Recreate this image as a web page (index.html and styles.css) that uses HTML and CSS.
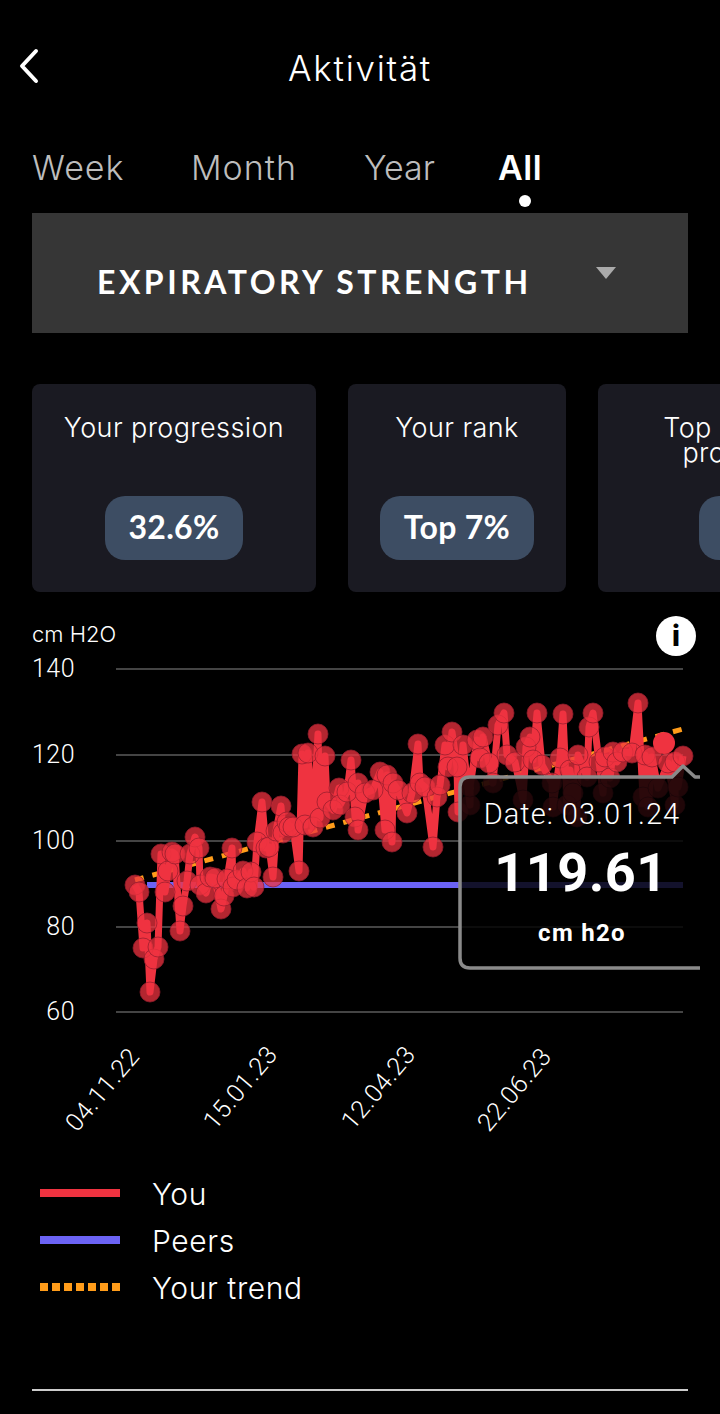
FILE: index.html
```html
<!DOCTYPE html>
<html lang="de">
<head>
<meta charset="utf-8">
<title>Aktivität</title>
<link rel="stylesheet" href="styles.css">
</head>
<body>
<main class="page">
  <header class="topbar">
    <svg class="back" viewBox="0 0 20 36" width="20" height="36"><path d="M17 3 3 18l14 15"/></svg>
    <h1 class="title">Aktivität</h1>
  </header>
  <nav class="tabs">
    <span class="tab tab-week">Week</span>
    <span class="tab tab-month">Month</span>
    <span class="tab tab-year">Year</span>
    <span class="tab tab-all">All</span>
  </nav>
  <div class="select">
    <span class="select-label">EXPIRATORY STRENGTH</span>
    <span class="select-arrow"></span>
  </div>
  <section class="cards">
    <article class="card card-a"><p class="card-title">Your progression</p><span class="pill pill-a">32.6%</span></article>
    <article class="card card-b"><p class="card-title">Your rank</p><span class="pill pill-b">Top 7%</span></article>
    <article class="card card-c"><p class="card-title">Top 10% peers<br>progression</p><span class="pill pill-c">9.1%</span></article>
  </section>
  <div class="chart-head">
    <span class="unit">cm H2O</span>
    <span class="info">i</span>
  </div>
  <svg class="chart" viewBox="0 650 700 500" width="700" height="500">
    <g class="grid">
      <line x1="116" x2="683" y1="669" y2="669"/>
      <line x1="116" x2="683" y1="755" y2="755"/>
      <line x1="116" x2="683" y1="841" y2="841"/>
      <line x1="116" x2="683" y1="927" y2="927"/>
      <line x1="116" x2="683" y1="1012" y2="1012"/>
    </g>
    <g class="ylabels">
      <text x="75" y="677">140</text>
      <text x="75" y="763">120</text>
      <text x="75" y="849">100</text>
      <text x="75" y="935">80</text>
      <text x="75" y="1020">60</text>
    </g>
    <line class="peers" x1="147" x2="683" y1="885" y2="885"/>
    <line class="trend" x1="135" x2="683" y1="880" y2="729"/>
    <polyline class="you" points="135,885 139,892 143,948 147,923 150,992 154,959 158,947 161,854 165,892 168,871 172,852 175,854 180,931 183,906 187,881 190,854 195,837 199,848 200,885 206,893 210,877 215,878 221,909 224,896 227,879 232,848 233,887 237,880 243,871 247,888 251,872 254,887 257,842 262,802 266,848 269,847 273,877 276,831 281,806 283,833 287,822 289,827 293,827 299,871 302,754 305,825 308,753 313,827 318,734 320,818 325,756 327,802 333,810 339,788 340,805 347,792 351,760 355,817 358,783 358,830 365,793 373,790 380,772 385,830 387,775 392,842 393,783 398,790 407,813 412,793 418,744 420,783 425,787 433,847 437,797 440,785 445,745 448,767 452,732 457,767 458,812 463,745 470,805 470,787 477,740 480,758 483,737 489,763 493,783 498,725 504,713 507,755 515,762 523,800 526,747 530,737 533,760 537,713 542,765 552,783 553,807 560,758 563,714 567,805 570,770 573,793 577,817 578,755 587,777 589,727 593,713 599,762 603,793 605,757 610,778 613,752 617,762 623,752 632,753 638,703 643,797 645,755 648,807 652,757 658,788 668,763 675,805 675,762 678,787 683,756"/>
    <g class="points">
      <circle cx="135" cy="885" r="10"/><circle cx="139" cy="892" r="10"/><circle cx="143" cy="948" r="10"/><circle cx="147" cy="923" r="10"/><circle cx="150" cy="992" r="10"/><circle cx="154" cy="959" r="10"/><circle cx="158" cy="947" r="10"/><circle cx="161" cy="854" r="10"/><circle cx="165" cy="892" r="10"/><circle cx="168" cy="871" r="10"/><circle cx="172" cy="852" r="10"/><circle cx="175" cy="854" r="10"/><circle cx="180" cy="931" r="10"/><circle cx="183" cy="906" r="10"/><circle cx="187" cy="881" r="10"/><circle cx="190" cy="854" r="10"/><circle cx="195" cy="837" r="10"/><circle cx="199" cy="848" r="10"/><circle cx="200" cy="885" r="10"/><circle cx="206" cy="893" r="10"/><circle cx="210" cy="877" r="10"/><circle cx="215" cy="878" r="10"/><circle cx="221" cy="909" r="10"/><circle cx="224" cy="896" r="10"/><circle cx="227" cy="879" r="10"/><circle cx="232" cy="848" r="10"/><circle cx="233" cy="887" r="10"/><circle cx="237" cy="880" r="10"/><circle cx="243" cy="871" r="10"/><circle cx="247" cy="888" r="10"/><circle cx="251" cy="872" r="10"/><circle cx="254" cy="887" r="10"/><circle cx="257" cy="842" r="10"/><circle cx="262" cy="802" r="10"/><circle cx="266" cy="848" r="10"/><circle cx="269" cy="847" r="10"/><circle cx="273" cy="877" r="10"/><circle cx="276" cy="831" r="10"/><circle cx="281" cy="806" r="10"/><circle cx="283" cy="833" r="10"/><circle cx="287" cy="822" r="10"/><circle cx="289" cy="827" r="10"/><circle cx="293" cy="827" r="10"/><circle cx="299" cy="871" r="10"/><circle cx="302" cy="754" r="10"/><circle cx="305" cy="825" r="10"/><circle cx="308" cy="753" r="10"/><circle cx="313" cy="827" r="10"/><circle cx="318" cy="734" r="10"/><circle cx="320" cy="818" r="10"/><circle cx="325" cy="756" r="10"/><circle cx="327" cy="802" r="10"/><circle cx="333" cy="810" r="10"/><circle cx="339" cy="788" r="10"/><circle cx="340" cy="805" r="10"/><circle cx="347" cy="792" r="10"/><circle cx="351" cy="760" r="10"/><circle cx="355" cy="817" r="10"/><circle cx="358" cy="783" r="10"/><circle cx="358" cy="830" r="10"/><circle cx="365" cy="793" r="10"/><circle cx="373" cy="790" r="10"/><circle cx="380" cy="772" r="10"/><circle cx="385" cy="830" r="10"/><circle cx="387" cy="775" r="10"/><circle cx="392" cy="842" r="10"/><circle cx="393" cy="783" r="10"/><circle cx="398" cy="790" r="10"/><circle cx="407" cy="813" r="10"/><circle cx="412" cy="793" r="10"/><circle cx="418" cy="744" r="10"/><circle cx="420" cy="783" r="10"/><circle cx="425" cy="787" r="10"/><circle cx="433" cy="847" r="10"/><circle cx="437" cy="797" r="10"/><circle cx="440" cy="785" r="10"/><circle cx="445" cy="745" r="10"/><circle cx="448" cy="767" r="10"/><circle cx="452" cy="732" r="10"/><circle cx="457" cy="767" r="10"/><circle cx="458" cy="812" r="10"/><circle cx="463" cy="745" r="10"/><circle cx="470" cy="805" r="10"/><circle cx="470" cy="787" r="10"/><circle cx="477" cy="740" r="10"/><circle cx="480" cy="758" r="10"/><circle cx="483" cy="737" r="10"/><circle cx="489" cy="763" r="10"/><circle cx="493" cy="783" r="10"/><circle cx="498" cy="725" r="10"/><circle cx="504" cy="713" r="10"/><circle cx="507" cy="755" r="10"/><circle cx="515" cy="762" r="10"/><circle cx="523" cy="800" r="10"/><circle cx="526" cy="747" r="10"/><circle cx="530" cy="737" r="10"/><circle cx="533" cy="760" r="10"/><circle cx="537" cy="713" r="10"/><circle cx="542" cy="765" r="10"/><circle cx="552" cy="783" r="10"/><circle cx="553" cy="807" r="10"/><circle cx="560" cy="758" r="10"/><circle cx="563" cy="714" r="10"/><circle cx="567" cy="805" r="10"/><circle cx="570" cy="770" r="10"/><circle cx="573" cy="793" r="10"/><circle cx="577" cy="817" r="10"/><circle cx="578" cy="755" r="10"/><circle cx="587" cy="777" r="10"/><circle cx="589" cy="727" r="10"/><circle cx="593" cy="713" r="10"/><circle cx="599" cy="762" r="10"/><circle cx="603" cy="793" r="10"/><circle cx="605" cy="757" r="10"/><circle cx="610" cy="778" r="10"/><circle cx="613" cy="752" r="10"/><circle cx="617" cy="762" r="10"/><circle cx="623" cy="752" r="10"/><circle cx="632" cy="753" r="10"/><circle cx="638" cy="703" r="10"/><circle cx="643" cy="797" r="10"/><circle cx="645" cy="755" r="10"/><circle cx="648" cy="807" r="10"/><circle cx="652" cy="757" r="10"/><circle cx="658" cy="788" r="10"/><circle cx="668" cy="763" r="10"/><circle cx="675" cy="805" r="10"/><circle cx="675" cy="762" r="10"/><circle cx="678" cy="787" r="10"/><circle cx="683" cy="756" r="10"/>
    </g>
    <circle class="active" cx="664" cy="743" r="11"/>
    <path class="tip" d="M470 777H672L683 766L695 777H704V968H470Q460 968 460 958V787Q460 777 470 777Z"/>
    <text class="tip-date" x="582" y="824">Date: 03.01.24</text>
    <text class="tip-value" x="581" y="891">119.61</text>
    <text class="tip-unit" x="582" y="941">cm h2o</text>
    <g class="xlabels">
      <text transform="translate(77 1133) rotate(-50)">04.11.22</text>
      <text transform="translate(215 1131) rotate(-50)">15.01.23</text>
      <text transform="translate(353 1131) rotate(-50)">12.04.23</text>
      <text transform="translate(489 1133) rotate(-50)">22.06.23</text>
    </g>
  </svg>
  <ul class="legend">
    <li class="legend-row"><span class="swatch swatch-you"></span><span>You</span></li>
    <li class="legend-row"><span class="swatch swatch-peers"></span><span>Peers</span></li>
    <li class="legend-row"><span class="swatch swatch-trend"></span><span>Your trend</span></li>
  </ul>
  <hr class="divider">
</main>
</body>
</html>
```

FILE: styles.css
```css
* { box-sizing: border-box; }
html, body { margin: 0; padding: 0; background: #000; }
body { width: 720px; height: 1414px; overflow: hidden; color: #fff; font-family: "Inter", "Liberation Sans", sans-serif; }
.page { display: flex; flex-direction: column; }

.topbar { position: relative; height: 136px; padding-top: 48px; display: flex; justify-content: center; }
.back { position: absolute; left: 19px; top: 48px; fill: none; stroke: #fff; stroke-width: 4; stroke-linecap: round; stroke-linejoin: round; }
.title { margin: 0; font-size: 35px; line-height: 40px; font-weight: 300; letter-spacing: 1.7px; }

.tabs { display: flex; height: 77px; padding-left: 32px; }
.tab { font-size: 34px; line-height: 63px; font-weight: 300; letter-spacing: 1px; color: #bdbdbd; }
.tab-week { width: 159px; }
.tab-month { width: 173px; }
.tab-year { width: 134px; letter-spacing: 0; }
.tab-all { position: relative; color: #fff; font-weight: 600; letter-spacing: .5px; }
.tab-all::after { content: ""; position: absolute; left: 21px; top: 59px; width: 12px; height: 12px; border-radius: 50%; background: #fff; }

.select { position: relative; margin: 0 32px; height: 120px; background: #363636; padding: 48px 0 0 65px; }
.select-label { display: block; font-family: "Lato", sans-serif; font-size: 32px; line-height: 42px; font-weight: 700; letter-spacing: 3.5px; white-space: nowrap; }
.select-arrow { position: absolute; left: 564px; top: 54px; border-left: 10px solid transparent; border-right: 10px solid transparent; border-top: 12px solid #aaa; }

.cards { display: flex; gap: 32px; margin: 51px 0 0 32px; width: 1000px; }
.card { height: 208px; border-radius: 8px; background: #1a1a22; flex: none; display: flex; flex-direction: column; align-items: center; padding-top: 31px; }
.card-a { width: 284px; }
.card-b { width: 218px; }
.card-c { width: 322px; }
.card-title { margin: 0; height: 81px; text-align: center; font-size: 27px; line-height: 25px; font-weight: 300; letter-spacing: .4px; }
.pill { height: 64px; border-radius: 20px; background: #3d4d63; font-family: "Lato", sans-serif; font-weight: 700; font-size: 32px; line-height: 61px; letter-spacing: .3px; text-align: center; }
.pill-a { width: 138px; }
.pill-b { width: 154px; }
.pill-c { width: 120px; }

.chart-head { display: flex; justify-content: space-between; align-items: flex-start; height: 58px; padding: 24px 24px 0 32px; }
.unit { margin-top: 5px; font-size: 22px; line-height: 26px; font-weight: 300; }
.info { width: 40px; height: 40px; border-radius: 50%; background: #fff; color: #000; font-size: 28px; line-height: 40px; font-weight: 800; text-align: center; }

.chart { display: block; flex: none; }
.grid line { stroke: #444; stroke-width: 2; }
.ylabels text { font-family: "Roboto", sans-serif; font-size: 25px; font-weight: 300; letter-spacing: .5px; fill: #fff; text-anchor: end; }
.peers { stroke: #6b63f5; stroke-width: 6; }
.trend { stroke: #ff9c1a; stroke-width: 5; stroke-dasharray: 9 9; }
.you { fill: none; stroke: #ef3340; stroke-width: 7; stroke-linejoin: round; }
.points circle { fill: rgba(239, 51, 64, .75); stroke: rgba(150, 30, 45, .75); stroke-width: 1; }
.active { fill: #ef3340; }
.tip { fill: rgba(0, 0, 0, .82); stroke: #8a8a8a; stroke-width: 3.5; stroke-linejoin: round; }
.tip-date, .tip-value, .tip-unit { fill: #fff; text-anchor: middle; font-family: "Roboto", sans-serif; }
.tip-date { font-size: 29px; font-weight: 300; letter-spacing: 1px; }
.tip-value { font-size: 54px; font-weight: 700; letter-spacing: .5px; }
.tip-unit { font-size: 24px; font-weight: 700; letter-spacing: 1.3px; }
.xlabels text { font-family: "Roboto", sans-serif; font-size: 25px; font-weight: 300; letter-spacing: .5px; fill: #fff; }

.legend { list-style: none; margin: 24px 0 0; padding: 0 0 0 40px; display: flex; flex-direction: column; gap: 7px; }
.legend-row { display: flex; align-items: center; gap: 32px; height: 40px; font-size: 30px; font-weight: 300; letter-spacing: .6px; }
.swatch { width: 80px; height: 8px; margin-top: -2px; }
.swatch-you { background: #ef3340; }
.swatch-peers { background: #6b63f5; }
.swatch-trend { background: repeating-linear-gradient(90deg, #ff9c1a 0 8px, transparent 8px 12px); }

.divider { margin: 81px 32px 0; border: 0; height: 2px; background: #ccc; }
```
